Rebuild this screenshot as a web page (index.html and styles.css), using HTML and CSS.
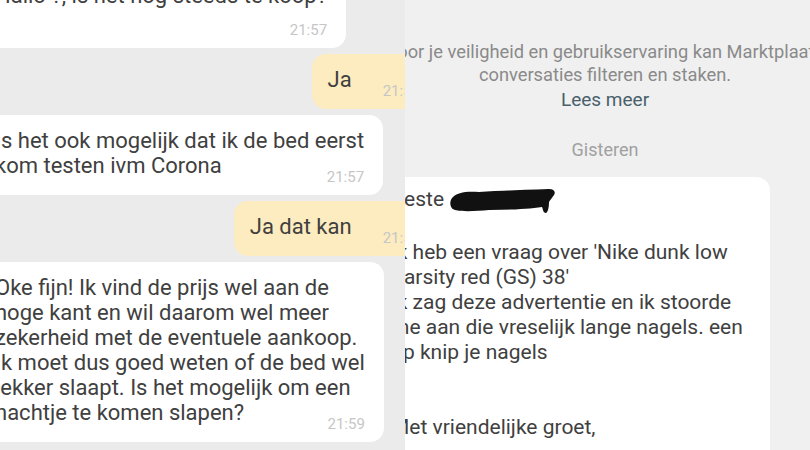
FILE: index.html
```html
<!DOCTYPE html>
<html>
<head>
    <title>Marktplaats gesprekken</title>
    <link rel="stylesheet" href="styles.css">
</head>
<body>
    <div class="collage">
        <!-- Left screenshot: chat about the bed -->
        <div class="panel panel-left">
            <div class="msg in first">
                <p>Hallo ?, is het nog steeds te koop?</p>
                <span class="time own-line">21:57</span>
            </div>
            <div class="msg out short">
                <p>Ja</p>
                <span class="time">21:57</span>
            </div>
            <div class="msg in">
                <p>Is het ook mogelijk dat ik de bed eerst<br>kom testen ivm Corona</p>
                <span class="time">21:57</span>
            </div>
            <div class="msg out short">
                <p>Ja dat kan</p>
                <span class="time">21:58</span>
            </div>
            <div class="msg in">
                <p>Oke fijn! Ik vind de prijs wel aan de<br>hoge kant en wil daarom wel meer<br>zekerheid met de eventuele aankoop.<br>Ik moet dus goed weten of de bed wel<br>lekker slaapt. Is het mogelijk om een<br>nachtje te komen slapen?</p>
                <span class="time">21:59</span>
            </div>
        </div>

        <!-- Right screenshot: the first message of a conversation -->
        <div class="panel panel-right">
            <div class="thread">
                <p class="notice">Voor je veiligheid en gebruikservaring kan Marktplaats<br>conversaties filteren en staken.</p>
                <a class="read-more">Lees meer</a>
                <div class="day">Gisteren</div>
                <div class="msg in letter">
                    <p>Beste <svg class="redacted" width="108" height="27" viewBox="0 0 108 27"><path d="M3 10 C8 4 18 3 30 4 C48 3 70 2 100 1 C105 1 107 4 105 7 C103 10 101 12 100 14 C100 19 99 24 97 25 C94 25 94 21 93 19 C80 21 60 22 40 22 C28 23 14 24 6 22 C1 21 0 14 3 10 Z" fill="#111"/></svg><br>
                    <br>
                    Ik heb een vraag over 'Nike dunk low<br>
                    Varsity red (GS) 38'<br>
                    Ik zag deze advertentie en ik stoorde<br>
                    me aan die vreselijk lange nagels. een<br>
                    tip knip je nagels<br>
                    <br>
                    <br>
                    Met vriendelijke groet,</p>
                </div>
            </div>
        </div>
    </div>
</body>
</html>
```

FILE: styles.css
```css
body {
    margin: 0;
    font-family: Roboto, "Noto Sans", sans-serif;
}
.collage {
    display: grid;
    grid-template-columns: 405px 405px;
    height: 450px;
    overflow: hidden;
}
.panel {
    overflow: hidden;
    display: flex;
    flex-direction: column;
}
.panel-left {
    background-color: #ebebeb;
    gap: 6px;
}
.panel-right {
    background-color: #f0f0f0;
}

/* chat bubbles */
.msg {
    font-size: 22px;
    line-height: 25px;
    color: #404040;
    padding: 13px 19px 9px 16px;
    border-radius: 14px;
}
.msg p {
    margin: 0;
}
.msg.in {
    background-color: #fff;
    align-self: flex-start;
    margin-left: -21px;
}
.msg.out {
    background-color: #fcecbf;
    align-self: flex-end;
    margin-right: -34px;
}
.msg.first {
    margin-top: -30px;
}
.msg.short {
    display: flex;
    align-items: flex-end;
}
.msg.short p {
    margin-bottom: 8px;
}
.time {
    display: block;
    text-align: right;
    font-size: 15px;
    line-height: 18px;
    color: #c6c6c6;
    margin-top: -10px;
}
.time.own-line {
    margin-top: 13px;
}
.msg.short .time {
    margin: 0 0 0 31px;
}

/* right screenshot */
.thread {
    width: 450px;
    margin-left: -25px;
    padding-top: 40px;
    display: flex;
    flex-direction: column;
    align-items: center;
}
.notice {
    margin: 0;
    font-size: 18.3px;
    line-height: 23px;
    color: #8a8a8a;
    text-align: center;
    white-space: nowrap;
}
.read-more {
    margin-top: 2px;
    font-size: 19px;
    line-height: 23px;
    color: #48606b;
}
.day {
    margin-top: 29px;
    font-size: 18px;
    line-height: 20px;
    color: #a0a0a0;
}
.msg.letter {
    align-self: flex-start;
    margin: 17px 0 0 -5px;
    padding: 10px 27px 20px 16px;
    font-size: 21px;
    height: 300px;
}
.redacted {
    vertical-align: -9px;
    filter: blur(0.7px);
}
```
